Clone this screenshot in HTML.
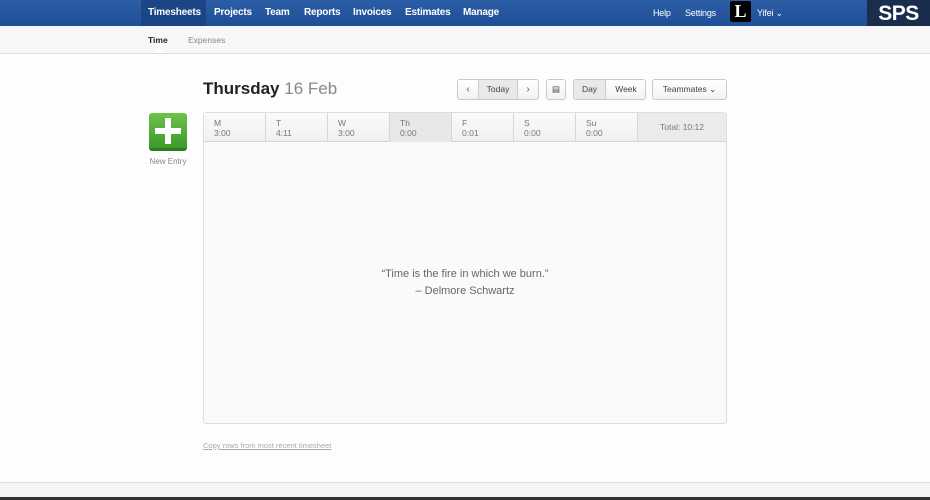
<!DOCTYPE html>
<html><head><meta charset="utf-8"><style>
*{box-sizing:border-box;margin:0;padding:0}
body{width:930px;height:500px;background:#fdfdfd;font-family:"Liberation Sans",Arial,sans-serif;position:relative;overflow:hidden}
.nav{position:absolute;left:0;top:0;width:930px;height:26px;background:linear-gradient(#2c5ea6,#1f4f95)}
.nav a{position:absolute;top:0;height:26px;line-height:26px;color:#fff;font-size:10px;font-weight:bold;letter-spacing:-0.2px}
.act{background:#1b4585}
.sps{position:absolute;left:867px;top:0;width:63px;height:29px;background:#1b2d4d;border-bottom:3px solid #8a8a8a;color:#fff;font-weight:bold;font-size:21px;text-align:center;line-height:27px;font-family:"Liberation Sans",sans-serif;letter-spacing:-0.5px}
.sub{position:absolute;left:0;top:26px;width:930px;height:28px;background:#f7f6f9;border-bottom:1px solid #ddd}
.sub span{position:absolute;top:9px;font-size:8.5px}
.btn{position:absolute;height:21px;border:1px solid #c8c8c8;border-radius:3px;background:linear-gradient(#fff,#f3f3f3);font-size:8.5px;color:#444;text-align:center;line-height:19px}
.grid{position:absolute;left:203px;top:112px;width:524px;height:312px;border:1px solid #ddd;border-radius:3px;background:#fafafa}
.days{position:absolute;left:0;top:0;width:522px;height:29px;background:linear-gradient(#fafafa,#f0f0f0);border-bottom:1px solid #d6d6d6}
.d{position:absolute;top:0;height:29px;border-right:1px solid #d6d6d6;font-size:8.5px;color:#777;padding:5px 0 0 10px;line-height:10px}
</style></head><body>
<div class="nav">
<a class="act" style="left:141px;width:65px;padding-left:7px">Timesheets</a>
<a style="left:214px">Projects</a>
<a style="left:265px">Team</a>
<a style="left:304px">Reports</a>
<a style="left:353px">Invoices</a>
<a style="left:405px">Estimates</a>
<a style="left:463px">Manage</a>
<a style="left:653px;font-weight:normal;font-size:9px">Help</a>
<a style="left:685px;font-weight:normal;font-size:9px">Settings</a>
<div style="position:absolute;left:730px;top:1px;width:21px;height:21px;background:#000;border-radius:2px;color:#fff;font-family:'Liberation Serif',serif;font-size:18px;font-weight:bold;text-align:center;line-height:21px">L</div>
<a style="left:757px;font-weight:normal;font-size:9px">Yifei ⌄</a>
</div>
<div class="sps">SPS</div>
<div class="sub">
<span style="left:148px;color:#222;font-weight:bold">Time</span>
<span style="left:188px;color:#888">Expenses</span>
<div style="position:absolute;left:154px;top:22px;width:0;height:0;border-left:5px solid transparent;border-right:5px solid transparent;border-bottom:5px solid #fff"></div>
</div>
<div style="position:absolute;left:203px;top:79px;font-size:17px;color:#222"><b>Thursday</b> <span style="color:#888">16 Feb</span></div>
<div class="btn" style="left:457px;top:79px;width:82px;"></div>
<div style="position:absolute;left:458px;top:80px;width:20px;height:19px;font-size:10px;color:#555;text-align:center;line-height:19px">‹</div>
<div style="position:absolute;left:478px;top:80px;width:40px;height:19px;background:#e9e9e9;border-left:1px solid #ccc;border-right:1px solid #ccc;font-size:8.5px;color:#444;text-align:center;line-height:19px">Today</div>
<div style="position:absolute;left:518px;top:80px;width:20px;height:19px;font-size:10px;color:#555;text-align:center;line-height:19px">›</div>
<div class="btn" style="left:546px;top:79px;width:20px;">▤</div>
<div class="btn" style="left:573px;top:79px;width:73px"></div>
<div style="position:absolute;left:574px;top:80px;width:32px;height:19px;background:#e9e9e9;border-right:1px solid #ccc;font-size:8.5px;color:#444;text-align:center;line-height:19px">Day</div>
<div style="position:absolute;left:607px;top:80px;width:38px;font-size:8.5px;color:#444;text-align:center;line-height:19px">Week</div>
<div class="btn" style="left:652px;top:79px;width:75px">Teammates ⌄</div>
<div style="position:absolute;left:149px;top:113px;width:38px;height:38px;border-radius:3px;background:linear-gradient(#6cc24a,#3f9a28);border-bottom:3px solid #2f7d1f"></div>
<div style="position:absolute;left:165px;top:118px;width:6px;height:26px;background:#fff"></div>
<div style="position:absolute;left:155px;top:128px;width:26px;height:6px;background:#fff"></div>
<div style="position:absolute;left:140px;top:157px;width:56px;text-align:center;font-size:8px;color:#888">New Entry</div>
<div class="grid">
<div class="days">
<div class="d" style="left:0;width:62px">M<br>3:00</div>
<div class="d" style="left:62px;width:62px">T<br>4:11</div>
<div class="d" style="left:124px;width:62px">W<br>3:00</div>
<div class="d" style="left:186px;width:62px;background:#e8e8e8">Th<br>0:00</div>
<div class="d" style="left:248px;width:62px">F<br>0:01</div>
<div class="d" style="left:310px;width:62px">S<br>0:00</div>
<div class="d" style="left:372px;width:62px">Su<br>0:00</div>
<div class="d" style="left:434px;width:88px;height:29px;border:none;border-bottom:1px solid #d6d6d6;background:#ebebeb;padding:9px 0 0 0;text-align:center">Total: 10:12</div>
</div>
<div style="position:absolute;left:0;top:153px;width:522px;text-align:center;font-size:11px;color:#666;line-height:17px">“Time is the fire in which we burn.”<br>– Delmore Schwartz</div>
</div>
<div style="position:absolute;left:203px;top:441px;font-size:7.5px;color:#aaa;text-decoration:underline">Copy rows from most recent timesheet</div>
<div style="position:absolute;left:0;top:482px;width:930px;height:16px;background:#f5f4f7;border-top:1px solid #ddd"></div>
<div style="position:absolute;left:0;top:497px;width:930px;height:3px;background:#333"></div>
</body></html>
